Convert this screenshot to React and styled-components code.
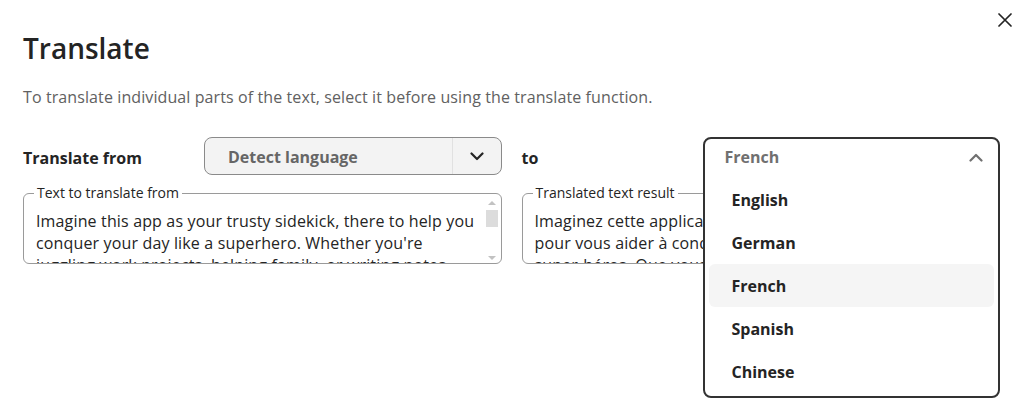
import React from 'react';
import styled, { createGlobalStyle } from 'styled-components';

const Global = createGlobalStyle`
  html, body { margin: 0; padding: 0; background: #fff; }
  body { font-family: "Open Sans", "Noto Sans", sans-serif; color: #242424; }
  * { box-sizing: border-box; }
`;

const Dialog = styled.div`
  position: relative;
  width: 1024px;
  height: 412px;
  padding: 28px 24px 0 23px;
  overflow: hidden;
  background: #fff;
`;

const CloseButton = styled.button`
  position: absolute;
  top: 10px;
  right: 9px;
  width: 20px;
  height: 20px;
  padding: 0;
  border: 0;
  background: none;
  color: #242424;
  display: flex;
  align-items: center;
  justify-content: center;
`;

const Title = styled.h2`
  margin: 0;
  font-size: 28px;
  line-height: 40px;
  font-weight: 600;
  color: #242424;
`;

const Description = styled.p`
  margin: 18px 0 0;
  font-size: 16px;
  line-height: 22px;
  letter-spacing: 0.1px;
  color: #616161;
`;

const Columns = styled.div`
  margin-top: 29px;
  display: grid;
  grid-template-columns: 1fr 1fr;
  column-gap: 20px;
`;

const Column = styled.div`
  display: flex;
  flex-direction: column;
  gap: 9px;
  min-width: 0;
`;

const SelectRow = styled.div`
  display: grid;
  grid-template-columns: 181px 1fr;
  align-items: center;
  height: 38px;
`;

const Label = styled.span`
  font-size: 16px;
  font-weight: 700;
  color: #242424;
  padding-top: 4px;
`;

const SelectWrap = styled.div`
  position: relative;
  height: 38px;
`;

const SelectBox = styled.div`
  display: flex;
  height: 38px;
  border: 1px solid #8a8a8a;
  border-radius: 8px;
  background: #f3f3f3;
`;

const SelectValue = styled.span`
  flex: 1;
  display: flex;
  align-items: center;
  padding-left: 23px;
  padding-top: 2px;
  font-size: 16px;
  font-weight: 700;
  color: #666;
`;

const SelectToggle = styled.span`
  width: 49px;
  border-left: 1px solid #e1e1e1;
  display: flex;
  align-items: center;
  justify-content: center;
  color: #242424;
`;

const Panel = styled.div`
  position: absolute;
  top: 0;
  left: 0;
  right: 0;
  z-index: 2;
  background: #fff;
  border: 2px solid #333;
  border-radius: 8px;
`;

const PanelHeader = styled.div`
  height: 39px;
  display: flex;
  align-items: center;
  justify-content: space-between;
  padding: 0 15px 3px 20px;
  font-size: 16px;
  font-weight: 700;
  color: #707070;
`;

const OptionList = styled.ul`
  list-style: none;
  margin: 0;
  padding: 0 4px 3px;
`;

const Option = styled.li`
  height: 43px;
  display: flex;
  align-items: center;
  padding-left: 23px;
  border-radius: 6px;
  font-size: 16px;
  font-weight: 700;
  color: #242424;
  background: ${(p) => (p.$active ? '#f5f5f5' : 'transparent')};
`;

const Field = styled.fieldset`
  margin: 0;
  padding: 0 3px 0 12px;
  border: 1px solid #9a9a9a;
  border-radius: 6px;
  min-width: 0;
`;

const Legend = styled.legend`
  margin-left: -2px;
  padding: 0 3px;
  font-size: 14px;
  line-height: 18px;
  color: #242424;
`;

const FieldBody = styled.div`
  display: flex;
  height: 61px;
`;

const FieldText = styled.div`
  flex: 1;
  min-width: 0;
  padding: 8px 4px 0 0;
  overflow: hidden;
  font-size: 16px;
  line-height: 22px;
  letter-spacing: 0.15px;
  color: #242424;
`;

const Scrollbar = styled.div`
  width: 12px;
  margin-left: 3px;
  margin-top: -3px;
  display: flex;
  flex-direction: column;
  align-items: center;
`;

const Arrow = styled.span`
  width: 0;
  height: 0;
  border-left: 4px solid transparent;
  border-right: 4px solid transparent;
  ${(p) =>
    p.$down
      ? 'border-top: 4px solid #c2c2c2; margin-top: auto; margin-bottom: 3px;'
      : 'border-bottom: 4px solid #c2c2c2; margin-top: 2px;'}
`;

const Thumb = styled.span`
  width: 12px;
  height: 17px;
  margin-top: 5px;
  background: #dcdcdc;
`;

const Chevron = ({ up }) => (
  <svg width="14" height="9" viewBox="0 0 14 9" fill="none">
    <polyline
      points={up ? '1.5,7.5 7,2 12.5,7.5' : '1.5,1.5 7,7 12.5,1.5'}
      stroke="currentColor"
      strokeWidth="2.2"
      strokeLinecap="round"
      strokeLinejoin="round"
    />
  </svg>
);

const CloseIcon = () => (
  <svg width="14" height="14" viewBox="0 0 14 14" fill="none">
    <path d="M1 1L13 13M13 1L1 13" stroke="currentColor" strokeWidth="1.7" strokeLinecap="round" />
  </svg>
);

const languages = ['English', 'German', 'French', 'Spanish', 'Chinese'];

export default function App() {
  return (
    <>
      <Global />
      <Dialog>
        <CloseButton aria-label="Close">
          <CloseIcon />
        </CloseButton>
        <Title>Translate</Title>
        <Description>
          To translate individual parts of the text, select it before using the translate function.
        </Description>
        <Columns>
          <Column>
            <SelectRow>
              <Label>Translate from</Label>
              <SelectWrap>
                <SelectBox>
                  <SelectValue>Detect language</SelectValue>
                  <SelectToggle>
                    <Chevron />
                  </SelectToggle>
                </SelectBox>
              </SelectWrap>
            </SelectRow>
            <Field>
              <Legend>Text to translate from</Legend>
              <FieldBody>
                <FieldText>
                  Imagine this app as your trusty sidekick, there to help you conquer your day like a
                  superhero. Whether you're juggling work projects, helping family, or writing notes.
                </FieldText>
                <Scrollbar>
                  <Arrow />
                  <Thumb />
                  <Arrow $down />
                </Scrollbar>
              </FieldBody>
            </Field>
          </Column>
          <Column>
            <SelectRow>
              <Label>to</Label>
              <SelectWrap>
                <Panel>
                  <PanelHeader>
                    <span>French</span>
                    <Chevron up />
                  </PanelHeader>
                  <OptionList>
                    {languages.map((l) => (
                      <Option key={l} $active={l === 'French'}>
                        {l}
                      </Option>
                    ))}
                  </OptionList>
                </Panel>
              </SelectWrap>
            </SelectRow>
            <Field>
              <Legend>Translated text result</Legend>
              <FieldBody>
                <FieldText>
                  Imaginez cette application comme votre fidèle acolyte, là pour vous aider à
                  conquérir votre journée comme un super-héros. Que vous jongliez avec des projets.
                </FieldText>
                <Scrollbar>
                  <Arrow />
                  <Thumb />
                  <Arrow $down />
                </Scrollbar>
              </FieldBody>
            </Field>
          </Column>
        </Columns>
      </Dialog>
    </>
  );
}
